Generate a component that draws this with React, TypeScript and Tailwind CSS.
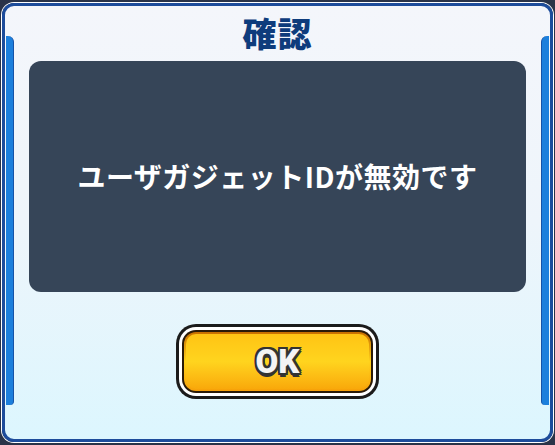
import React from "react";

const jp = "font-['Noto_Sans_CJK_JP','Noto_Sans',sans-serif]";

export default function App() {
  return (
    <div className={`w-[555px] h-[445px] bg-[#2a3348] px-[2px] pt-[3px] pb-[3px] ${jp}`}>
      <div className="relative h-full rounded-[12px] border-[3px] border-[#1d4c9b] bg-gradient-to-b from-[#f4f6fb] via-[#eef5fb] to-[#dcf6fe] shadow-[0_0_0_1px_#ffffff] flex flex-col items-center">
        <div className="absolute left-[1px] top-[30px] bottom-[34px] w-[8px] bg-[#1c7fdc] rounded-tr-[6px] rounded-br-[4px] border-r-[1px] border-[#1553a8]" />
        <div className="absolute right-[1px] top-[30px] bottom-[34px] w-[8px] bg-[#1c7fdc] rounded-tl-[6px] rounded-bl-[4px] border-l-[1px] border-[#1553a8]" />

        <div className="h-[55px] flex items-center justify-center pb-[2px]">
          <span className="text-[34px] font-black leading-none text-[#0e3c7c] tracking-[1px]">確認</span>
        </div>

        <div className="w-[497px] h-[231px] rounded-[12px] bg-[#364558] flex items-center justify-center">
          <span className="text-[28px] font-bold text-white leading-none pb-[2px] tracking-[0.5px]">
            ユーザガジェットIDが無効です
          </span>
        </div>

        <div className="mt-[32px] w-[203px] h-[75px] rounded-[20px] bg-[#1b1b1b] p-[3px]">
          <div className="h-full rounded-[17px] bg-white p-[3px]">
            <div className="h-full rounded-[14px] bg-[#2a1a08] p-[2px]">
              <div className="h-full rounded-[12px] bg-gradient-to-b from-[#c86e00] via-[#ffd21c] to-[#f7a008] p-[2px] flex items-center justify-center">
                <div className="w-full h-full rounded-[10px] bg-gradient-to-b from-[#ffc414] via-[#ffd41e] to-[#f9a90a] flex items-center justify-center">
                  <span className="font-['Roboto','Noto_Sans',sans-serif] text-[33px] font-black text-[#f4f4f4] leading-none [text-shadow:2px_0_0_#333,-2px_0_0_#333,0_2px_0_#333,0_-2px_0_#333,2px_2px_0_#333,-2px_-2px_0_#333,2px_-2px_0_#333,-2px_2px_0_#333,0_4px_0_#333]">
                    OK
                  </span>
                </div>
              </div>
            </div>
          </div>
        </div>
      </div>
    </div>
  );
}
